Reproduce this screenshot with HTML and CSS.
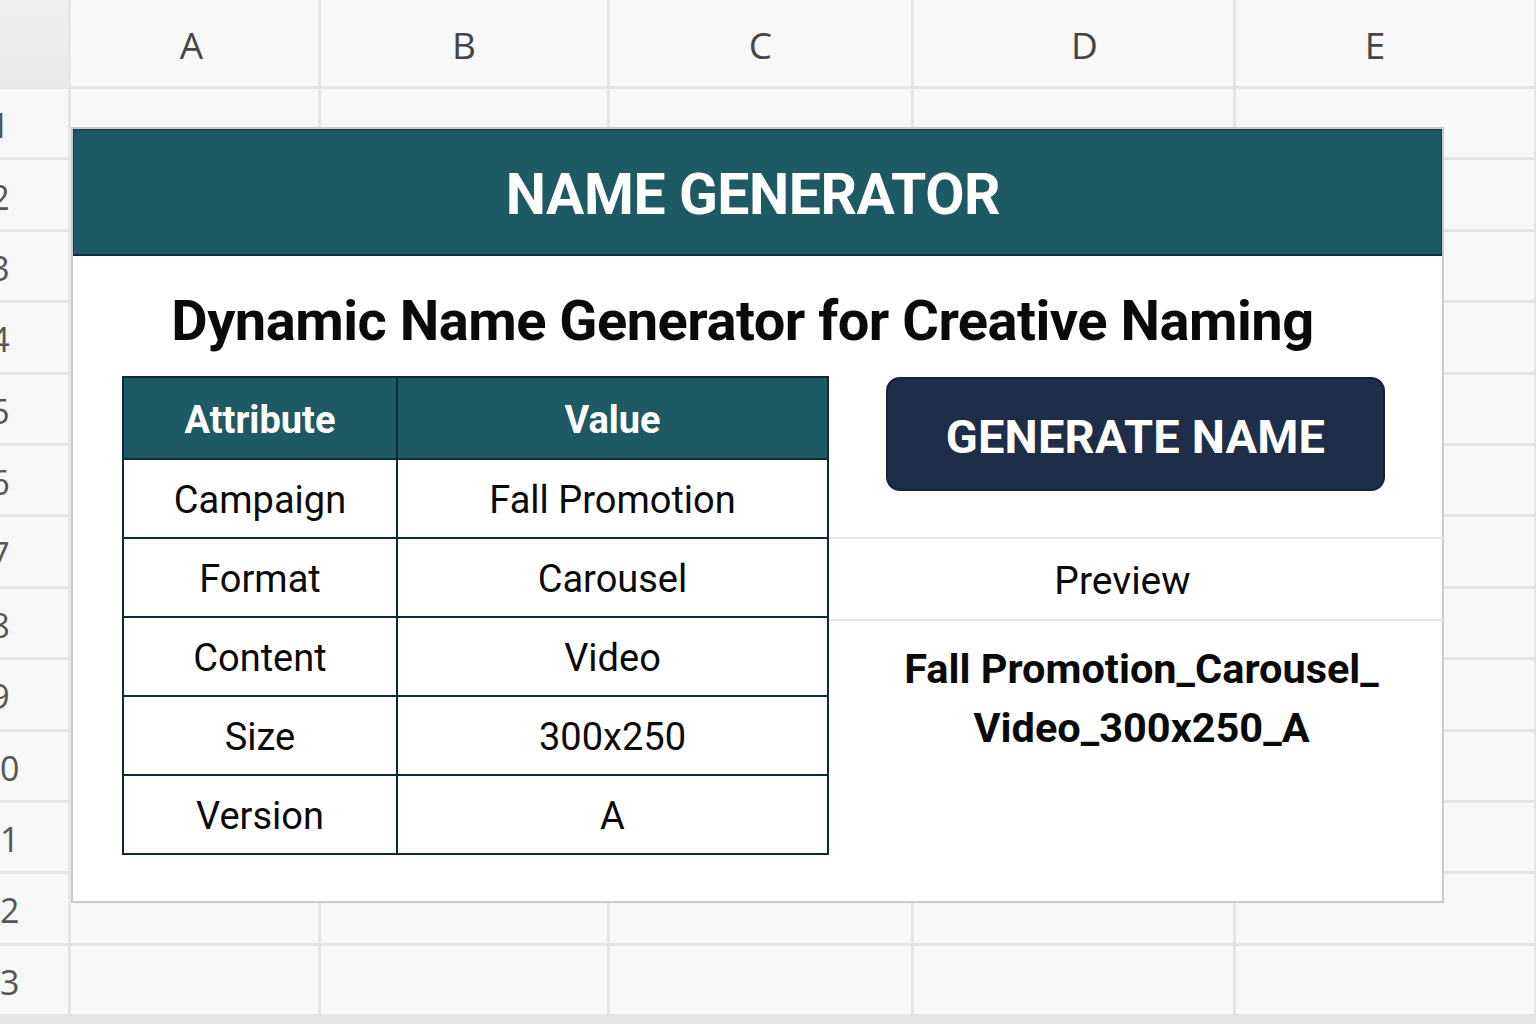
FILE: index.html
```html
<!DOCTYPE html>
<html lang="en">
<head>
<meta charset="utf-8">
<title>Name Generator</title>
<link rel="stylesheet" href="styles.css">
</head>
<body>
<div class="sheet">
  <div class="corner"></div>
  <div class="colh col-a">A</div>
  <div class="colh col-b">B</div>
  <div class="colh col-c">C</div>
  <div class="colh col-d">D</div>
  <div class="colh col-e">E</div>

  <div class="rowh"><span>1</span></div><div class="cell"></div><div class="cell"></div><div class="cell"></div><div class="cell"></div><div class="cell"></div>
  <div class="rowh"><span>2</span></div><div class="cell"></div><div class="cell"></div><div class="cell"></div><div class="cell"></div><div class="cell"></div>
  <div class="rowh"><span>3</span></div><div class="cell"></div><div class="cell"></div><div class="cell"></div><div class="cell"></div><div class="cell"></div>
  <div class="rowh"><span>4</span></div><div class="cell"></div><div class="cell"></div><div class="cell"></div><div class="cell"></div><div class="cell"></div>
  <div class="rowh"><span>5</span></div><div class="cell"></div><div class="cell"></div><div class="cell"></div><div class="cell"></div><div class="cell"></div>
  <div class="rowh"><span>6</span></div><div class="cell"></div><div class="cell"></div><div class="cell"></div><div class="cell"></div><div class="cell"></div>
  <div class="rowh"><span>7</span></div><div class="cell"></div><div class="cell"></div><div class="cell"></div><div class="cell"></div><div class="cell"></div>
  <div class="rowh"><span>8</span></div><div class="cell"></div><div class="cell"></div><div class="cell"></div><div class="cell"></div><div class="cell"></div>
  <div class="rowh"><span>9</span></div><div class="cell"></div><div class="cell"></div><div class="cell"></div><div class="cell"></div><div class="cell"></div>
  <div class="rowh"><span>10</span></div><div class="cell"></div><div class="cell"></div><div class="cell"></div><div class="cell"></div><div class="cell"></div>
  <div class="rowh"><span>11</span></div><div class="cell"></div><div class="cell"></div><div class="cell"></div><div class="cell"></div><div class="cell"></div>
  <div class="rowh"><span>12</span></div><div class="cell"></div><div class="cell"></div><div class="cell"></div><div class="cell"></div><div class="cell"></div>
  <div class="rowh"><span>13</span></div><div class="cell"></div><div class="cell"></div><div class="cell"></div><div class="cell"></div><div class="cell"></div>
</div>

<section class="card">
  <header class="card-head">NAME GENERATOR</header>
  <h1 class="subtitle">Dynamic Name Generator for Creative Naming</h1>
  <div class="card-body">
    <table class="attrs">
      <thead>
        <tr><th class="c1">Attribute</th><th class="c2">Value</th></tr>
      </thead>
      <tbody>
        <tr><td>Campaign</td><td>Fall Promotion</td></tr>
        <tr><td>Format</td><td>Carousel</td></tr>
        <tr><td>Content</td><td>Video</td></tr>
        <tr><td>Size</td><td>300x250</td></tr>
        <tr><td>Version</td><td>A</td></tr>
      </tbody>
    </table>
    <div class="side">
      <div class="btn-wrap">
        <button class="gen-btn" type="button">GENERATE NAME</button>
      </div>
      <div class="preview-label">Preview</div>
      <div class="result">Fall Promotion_Carousel_<br>Video_300x250_A</div>
    </div>
  </div>
</section>
</body>
</html>
```

FILE: styles.css
```css
html, body {
  margin: 0;
  padding: 0;
}
body {
  width: 1536px;
  height: 1024px;
  overflow: hidden;
  background: #e6e6e6;
  font-family: Roboto, "Liberation Sans", Arial, sans-serif;
  position: relative;
}

/* spreadsheet background */
.sheet {
  display: grid;
  grid-template-columns: 68px 247px 286px 301px 319px 298px;
  grid-template-rows: 86px repeat(13, 68.4px) 20px;
  gap: 3px;
  background: #e6e6e6;
  height: 1024px;
  overflow: hidden;
}
.corner {
  background: linear-gradient(180deg, #f0f0f0 0%, #e8e8e8 100%);
}
.colh {
  background: #f8f8f8;
  display: flex;
  align-items: center;
  justify-content: center;
  font-family: "Open Sans", "Liberation Sans", sans-serif;
  font-size: 37px;
  color: #454545;
  padding-top: 2px;
}
.col-a { padding-right: 6px; }
.col-d { padding-left: 22px; }
.col-e { padding-right: 20px; }
.rowh {
  background: #f7f7f7;
  overflow: hidden;
  display: flex;
  align-items: center;
}
.rowh span {
  display: block;
  width: 80px;
  margin-left: -40px;
  text-align: center;
  font-family: "Open Sans", "Liberation Sans", sans-serif;
  font-size: 34px;
  color: #555;
  padding-top: 4px;
}
.cell {
  background: #f8f8f8;
}

/* card overlay */
.card {
  position: absolute;
  left: 71px;
  top: 127px;
  width: 1369px;
  height: 772px;
  background: #fff;
  border: 2px solid #cbcbcb;
  display: flex;
  flex-direction: column;
}
.card-head {
  background: #1e5a63;
  border: 1px solid #14414a;
  border-bottom: 2px solid #0e2d35;
  box-sizing: border-box;
  height: 127px;
  display: flex;
  align-items: center;
  justify-content: center;
  color: #fff;
  font-weight: 700;
  font-size: 57px;
  letter-spacing: -0.4px;
  padding: 4px 9px 0 0;
}
.subtitle {
  margin: 33px 0 23px;
  padding-right: 30px;
  text-align: center;
  font-size: 56px;
  line-height: 64px;
  font-weight: 700;
  color: #0a0a0a;
  letter-spacing: -0.5px;
}
.card-body {
  display: flex;
  padding-left: 49px;
}

/* attribute table */
.attrs {
  border-collapse: collapse;
  width: 707px;
  flex: none;
  table-layout: fixed;
}
.attrs th, .attrs td {
  border: 2px solid #0f2a33;
  text-align: center;
  padding: 3px 0 0;
}
.attrs .c1 { width: 272px; }
.attrs th {
  background: #1e5a63;
  color: #fff;
  font-size: 38px;
  font-weight: 700;
  height: 77px;
}
.attrs td {
  font-size: 38px;
  color: #0a0a0a;
  height: 74px;
}

/* right side */
.side {
  flex: 1;
  display: flex;
  flex-direction: column;
}
.btn-wrap {
  height: 161px;
  padding: 1px 57px 0 57px;
  box-sizing: border-box;
}
.gen-btn {
  display: block;
  width: 100%;
  height: 114px;
  background: #1e2d48;
  border: 2px solid #15223a;
  border-radius: 14px;
  color: #fff;
  font-family: Roboto, "Liberation Sans", sans-serif;
  font-weight: 700;
  font-size: 47px;
  letter-spacing: 0.2px;
  padding: 4px 0 0;
}
.preview-label {
  border-top: 2px solid #e4e4e4;
  border-bottom: 2px solid #e4e4e4;
  height: 77px;
  display: flex;
  align-items: center;
  justify-content: center;
  font-size: 39px;
  color: #0a0a0a;
  padding: 3px 28px 0 0;
  box-sizing: content-box;
  margin-right: -2px;
}
.result {
  padding: 18px 0 0 12px;
  text-align: center;
  font-size: 41.5px;
  line-height: 59px;
  font-weight: 700;
  color: #0a0a0a;
}
```
